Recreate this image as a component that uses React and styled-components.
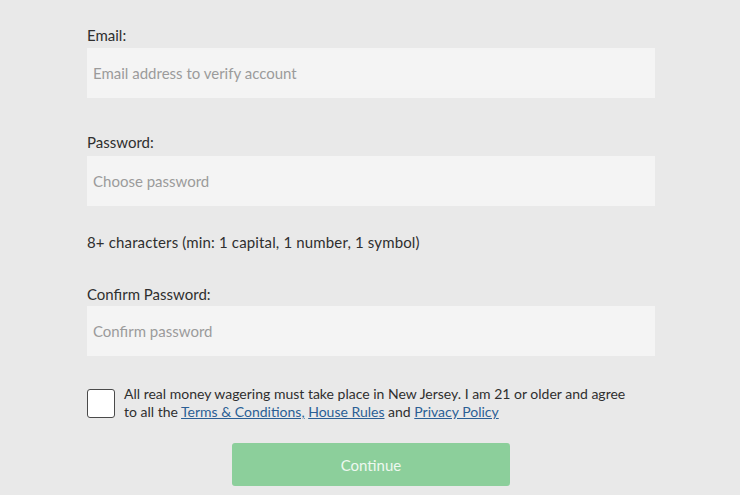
import styled, { createGlobalStyle } from "styled-components";

const GlobalStyle = createGlobalStyle`
	body {
		margin: 0;
		background: #e9e9e9;
		font-family: Lato, "Open Sans", sans-serif;
		color: #333333;
	}
`;

const App = () => {
	return (
		<>
			<GlobalStyle />
			<S.Page>
				<S.Form>
					<S.Label $bottom={3}>Email:</S.Label>
					<S.Input placeholder="Email address to verify account" />

					<S.Label $top={34}>Password:</S.Label>
					<S.Input type="password" placeholder="Choose password" />
					<S.Hint>8+ characters (min: 1 capital, 1 number, 1 symbol)</S.Hint>

					<S.Label $top={32} $bottom={2}>Confirm Password:</S.Label>
					<S.Input type="password" placeholder="Confirm password" />

					<S.AgreeRow>
						<S.CheckBox />
						<S.AgreeText>
							All real money wagering must take place in New Jersey. I am 21 or older and agree
							to all the <S.Link href="#">Terms &amp; Conditions,</S.Link>{" "}
							<S.Link href="#">House Rules</S.Link> and <S.Link href="#">Privacy Policy</S.Link>
						</S.AgreeText>
					</S.AgreeRow>

					<S.Button type="button">Continue</S.Button>
				</S.Form>
			</S.Page>
		</>
	);
};
export default App;

const Page = styled.div`
	width: 740px;
	height: 495px;
	overflow: hidden;
	padding: 25px 0 0 87px;
	box-sizing: border-box;
`;

const Form = styled.div`
	width: 568px;
	display: flex;
	flex-direction: column;
`;

const Label = styled.div`
	margin-top: ${({ $top }) => $top || 0}px;
	margin-bottom: ${({ $bottom }) => ($bottom === undefined ? 4 : $bottom)}px;
	font-size: 15px;
	line-height: 20px;
	color: #2f2f2f;
`;

const Input = styled.input`
	width: 100%;
	height: 50px;
	box-sizing: border-box;
	border: none;
	outline: none;
	background: #f4f4f4;
	padding: 0 6px;
	font-family: inherit;
	font-size: 15px;
	color: #333333;
	&::placeholder {
		color: #9b9b9b;
	}
`;

const Hint = styled.div`
	margin-top: 26px;
	font-size: 15px;
	line-height: 20px;
	letter-spacing: 0.15px;
	color: #2f2f2f;
`;

const AgreeRow = styled.div`
	margin-top: 33px;
	display: flex;
	align-items: flex-start;
	gap: 9px;
`;

const CheckBox = styled.div`
	width: 28px;
	height: 29px;
	flex-shrink: 0;
	box-sizing: border-box;
	border: 1.5px solid #4a4a4a;
	border-radius: 3px;
	background: #ffffff;
`;

const AgreeText = styled.div`
	width: 506px;
	margin-top: -4px;
	font-size: 14px;
	line-height: 18px;
	color: #2f2f2f;
`;

const Link = styled.a`
	color: #2b5f95;
	text-decoration: underline;
`;

const Button = styled.button`
	align-self: center;
	margin-top: 22px;
	width: 278px;
	height: 43px;
	border: none;
	border-radius: 3px;
	background: #8ccf9b;
	color: #eef8f0;
	font-family: inherit;
	font-size: 15px;
`;

const S = {
	Page,
	Form,
	Label,
	Input,
	Hint,
	AgreeRow,
	CheckBox,
	AgreeText,
	Link,
	Button,
};
